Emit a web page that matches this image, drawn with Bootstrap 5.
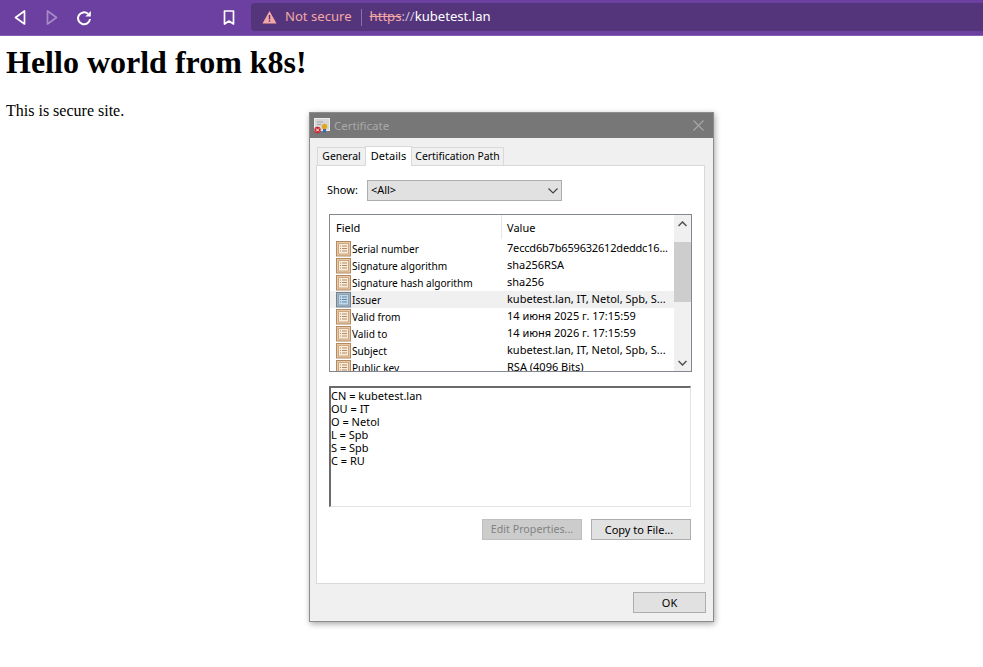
<!DOCTYPE html>
<html>

<head>
  <meta charset="utf-8">
  <title>kubetest.lan</title>
  <link href="https://cdn.jsdelivr.net/npm/bootstrap@5.3.2/dist/css/bootstrap.min.css" rel="stylesheet" type="text/css" />
  <script src="https://cdn.jsdelivr.net/npm/bootstrap@5.3.2/dist/js/bootstrap.bundle.min.js"></script>
  <style>
    body {
      background: #fff;
      color: #000;
      font-family: "Liberation Serif", serif;
      font-size: 16px;
      min-height: 667px;
      position: relative;
      overflow: hidden;
    }

    /* browser toolbar */
    .browser-bar {
      height: 36px;
      background: #6c40a0;
      border-bottom: 1px solid #8660b2;
      font-family: "Noto Sans", sans-serif;
      padding: 3px 0 0 12px;
    }

    .tool-icon {
      width: 16px;
      height: 18px;
      margin-top: 6px;
      flex: none;
    }

    .nav-gap-a { margin-left: 16px; }
    .nav-gap-b { margin-left: 16px; }
    .nav-gap-c { margin-left: 129px; }

    .address-box {
      width: 732px;
      height: 28px;
      margin-left: 14px;
      background: #54357b;
      border-radius: 4px 0 0 4px;
      font-size: 13.1px;
      padding-left: 11px;
    }

    .warn-text { color: #f4a7a4; margin-left: 8px; }
    .addr-sep { width: 1px; height: 17px; background: #8a6fae; margin: 0 8px 0 9px; }
    .addr-https { color: #f4a7a4; text-decoration: line-through; }
    .addr-slash { color: #c9bcdc; }
    .addr-host { color: #fff; }

    /* page content */
    .page-title {
      font-family: "Liberation Serif", serif;
      font-size: 32px;
      font-weight: 700;
      line-height: 37px;
      margin: 8px 0 0 6px;
    }

    .page-text {
      margin: 21px 0 0 6px;
      line-height: 18px;
    }

    /* certificate window */
    .cert-window {
      position: absolute;
      left: 309px;
      top: 112px;
      width: 405px;
      height: 510px;
      background: #f0f0f0;
      border: 1px solid #8c8c8c;
      box-shadow: 1px 2px 6px rgba(0, 0, 0, .35);
      font-family: "Noto Sans", sans-serif;
      font-size: 11px;
      color: #000;
    }

    .cert-title {
      height: 25px;
      background: #777;
      color: #a9a9a9;
      font-size: 11.5px;
      padding-left: 4px;
    }

    .cert-title-text { margin-left: 4px; }
    .cert-close { margin-left: auto; margin-right: 9px; }

    .tab-strip {
      height: 27px;
      padding: 7px 0 0 8px;
      align-items: flex-end;
    }

    .win-tab {
      height: 18px;
      line-height: 17px;
      background: #f0f0f0;
      border: 1px solid #d9d9d9;
      border-bottom: 0;
      margin-left: -1px;
      white-space: nowrap;
      text-align: center;
      font-size: 10.4px;
    }

    .tab-general { width: 49px; }
    .tab-details { width: 47px; }
    .tab-path { width: 93px; }

    .win-tab-on {
      height: 20px;
      line-height: 17px;
      background: #fff;
      margin-bottom: -1px;
      position: relative;
      z-index: 1;
      font-size: 11px;
    }

    .tab-panel {
      width: 389px;
      height: 419px;
      margin-left: 6px;
      background: #fff;
      border: 1px solid #d9d9d9;
      padding: 14px 13px 0 12px;
    }

    .show-row { margin-left: -2px; }

    .show-select {
      width: 195px;
      height: 21px;
      margin-left: 9px;
      padding: 0 3px 0 3px;
      background: #e1e1e1;
      border: 1px solid #adadad;
    }

    .field-list {
      width: 363px;
      height: 158px;
      margin-top: 13px;
      border: 1px solid #828790;
      overflow: hidden;
    }

    .field-main { width: 344px; flex: none; overflow: hidden; }
    .field-head { height: 25px; }
    .head-a { width: 172px; padding-left: 6px; border-right: 1px solid #e5e5e5; height: 24px; line-height: 25px; }
    .head-b { padding-left: 5px; height: 24px; line-height: 25px; }

    .field-row { height: 17px; line-height: 16px; white-space: nowrap; }
    .field-row-on { background: #f0f0f0; }
    .field-name { width: 172px; padding-left: 6px; flex: none; gap: 1px; font-size: 10.1px; }
    .field-name svg { flex: none; }
    .field-value { padding-left: 5px; }
    .value-tight { letter-spacing: -0.18px; }

    .scroll-track { width: 17px; background: #f0f0f0; }
    .scroll-btn { height: 17px; margin-top: 0; }
    .scroll-gap { height: 10px; }
    .scroll-thumb { height: 60px; background: #cdcdcd; }

    .detail-box {
      width: 362px;
      height: 121px;
      margin-top: 14px;
      padding: 1px 0;
      border: 1px solid #e3e3e3;
      border-top: 2px solid #6b6b6b;
      border-left: 2px solid #6b6b6b;
      line-height: 13px;
      white-space: pre;
    }

    .win-btn {
      height: 21px;
      padding: 0;
      border-radius: 0;
      font-size: 11px;
      line-height: 19px;
      color: #000;
      background: #e1e1e1;
      border: 1px solid #adadad;
    }

    .win-btn:disabled {
      color: #838383;
      background: #cccccc;
      border-color: #bfbfbf;
      opacity: 1;
      font-size: 10.7px;
    }

    .panel-btns { margin-top: 12px; width: 362px; gap: 9px; }
    .btn-wide { width: 100px; }
    .btn-copy { padding-right: 4px; }
    .btn-ok { width: 73px; }
    .cert-foot { padding: 8px 7px 0 0; }
  </style>
</head>

<body>
  <svg width="0" height="0" class="d-block position-absolute">
    <defs>
      <g id="doc-orange">
        <rect x="0.5" y="0.5" width="14" height="14.500" fill="#e8c9a6" stroke="#b48a62" />
        <rect x="2.500" y="2.500" width="10" height="10.500" fill="#f8ecdc" stroke="#cfa77e" />
        <path d="M6 5h5M6 7.500h5M6 10h5M4 5h1M4 7.500h1M4 10h1" stroke="#b58a62" fill="none" />
      </g>
      <g id="doc-blue">
        <rect x="0.5" y="0.5" width="14" height="14.500" fill="#a3b4c2" stroke="#76838f" />
        <rect x="2.500" y="2.500" width="10" height="10.500" fill="#c4d8e8" stroke="#8ba4b8" />
        <path d="M6 5h5M6 7.500h5M6 10h5M4 5h1M4 7.500h1M4 10h1" stroke="#5d86a8" fill="none" />
      </g>
    </defs>
  </svg>

  <header class="browser-bar d-flex">
    <svg class="tool-icon" viewBox="0 0 16 18" fill="none" stroke="#fff" stroke-width="1.700" stroke-linejoin="round"><path d="M12.500 2v13L3.500 8.500z" /></svg>
    <svg class="tool-icon nav-gap-a" viewBox="0 0 16 18" fill="none" stroke="#a68bc6" stroke-width="1.700" stroke-linejoin="round"><path d="M3.500 2v13l9-6.500z" /></svg>
    <svg class="tool-icon nav-gap-b" viewBox="0 0 16 18" fill="none" stroke="#fff" stroke-width="2"><path d="M14 10a6 6 0 1 1-2-5.200" /><path d="M14.800 2v5.500H9.300z" fill="#fff" stroke="none" /></svg>
    <svg class="tool-icon nav-gap-c" viewBox="0 0 16 18" fill="none" stroke="#fff" stroke-width="1.700" stroke-linejoin="round"><path d="M3.500 2h9v13L8 12l-4.500 3z" /></svg>
    <div class="address-box d-flex align-items-center">
      <svg width="15" height="14" viewBox="0 0 15 14"><path d="M7.500 1 14.500 13.500H.5z" fill="#f4a7a4" /><path d="M6.800 5h1.400v4.500H6.800zM6.800 10.300h1.400v1.500H6.800z" fill="#54357b" /></svg>
      <span class="warn-text">Not secure</span>
      <span class="addr-sep"></span>
      <span><span class="addr-https">https</span><span class="addr-slash">://</span><span class="addr-host">kubetest.lan</span></span>
    </div>
  </header>

  <main>
    <h1 class="page-title">Hello world from k8s!</h1>
    <p class="page-text">This is secure site.</p>
  </main>

  <div class="cert-window">
    <div class="cert-title d-flex align-items-center">
      <svg width="16" height="16" viewBox="0 0 16 16">
        <rect x="0.500" y="0.500" width="15" height="12" fill="#d6d6d6" stroke="#ececec" />
        <path d="M3 4h6M3 6.500h4" stroke="#a8a8a8" />
        <circle cx="3.500" cy="12" r="3.200" fill="#c8242b" />
        <path d="M2 10.500l3 3M5 10.500l-3 3" stroke="#fff" />
        <path d="M9 10v5l1.500-1.200L12 15v-5" fill="#3568b8" />
        <circle cx="10.500" cy="8.500" r="2.700" fill="#e0a81e" />
      </svg>
      <span class="cert-title-text">Certificate</span>
      <svg class="cert-close" width="11" height="11" viewBox="0 0 11 11" stroke="#a9a9a9" stroke-width="1.100"><path d="M.5.500l10 10M10.500.500l-10 10" /></svg>
    </div>

    <div class="tab-strip d-flex">
      <div class="win-tab tab-general">General</div>
      <div class="win-tab win-tab-on tab-details">Details</div>
      <div class="win-tab tab-path">Certification Path</div>
    </div>

    <div class="tab-panel">
      <div class="show-row d-flex align-items-center">
        <span>Show:</span>
        <div class="show-select d-flex align-items-center justify-content-between">
          <span>&lt;All&gt;</span>
          <svg width="10" height="6" viewBox="0 0 10 6" fill="none" stroke="#444" stroke-width="1.200"><path d="M.5.500 5 5 9.500.5" /></svg>
        </div>
      </div>

      <div class="field-list d-flex">
        <div class="field-main">
          <div class="field-head d-flex">
            <div class="head-a">Field</div>
            <div class="head-b">Value</div>
          </div>
          <div class="field-row d-flex"><div class="field-name d-flex align-items-center"><svg width="15" height="16"><use href="#doc-orange" /></svg><span>Serial number</span></div><div class="field-value value-tight">7eccd6b7b659632612deddc16...</div></div>
          <div class="field-row d-flex"><div class="field-name d-flex align-items-center"><svg width="15" height="16"><use href="#doc-orange" /></svg><span>Signature algorithm</span></div><div class="field-value">sha256RSA</div></div>
          <div class="field-row d-flex"><div class="field-name d-flex align-items-center"><svg width="15" height="16"><use href="#doc-orange" /></svg><span>Signature hash algorithm</span></div><div class="field-value">sha256</div></div>
          <div class="field-row field-row-on d-flex"><div class="field-name d-flex align-items-center"><svg width="15" height="16"><use href="#doc-blue" /></svg><span>Issuer</span></div><div class="field-value">kubetest.lan, IT, Netol, Spb, S...</div></div>
          <div class="field-row d-flex"><div class="field-name d-flex align-items-center"><svg width="15" height="16"><use href="#doc-orange" /></svg><span>Valid from</span></div><div class="field-value">14 июня 2025 г. 17:15:59</div></div>
          <div class="field-row d-flex"><div class="field-name d-flex align-items-center"><svg width="15" height="16"><use href="#doc-orange" /></svg><span>Valid to</span></div><div class="field-value">14 июня 2026 г. 17:15:59</div></div>
          <div class="field-row d-flex"><div class="field-name d-flex align-items-center"><svg width="15" height="16"><use href="#doc-orange" /></svg><span>Subject</span></div><div class="field-value">kubetest.lan, IT, Netol, Spb, S...</div></div>
          <div class="field-row d-flex"><div class="field-name d-flex align-items-center"><svg width="15" height="16"><use href="#doc-orange" /></svg><span>Public key</span></div><div class="field-value">RSA (4096 Bits)</div></div>
        </div>
        <div class="scroll-track d-flex flex-column">
          <div class="scroll-btn d-flex align-items-center justify-content-center">
            <svg width="9" height="6" viewBox="0 0 9 6" fill="none" stroke="#505050" stroke-width="1.500"><path d="M.5 5 4.500 1l4 4" /></svg>
          </div>
          <div class="scroll-gap"></div>
          <div class="scroll-thumb"></div>
          <div class="scroll-btn d-flex align-items-center justify-content-center mt-auto">
            <svg width="9" height="6" viewBox="0 0 9 6" fill="none" stroke="#505050" stroke-width="1.500"><path d="M.5 1l4 4 4-4" /></svg>
          </div>
        </div>
      </div>

      <div class="detail-box">CN = kubetest.lan
OU = IT
O = Netol
L = Spb
S = Spb
C = RU</div>

      <div class="panel-btns d-flex justify-content-end">
        <button class="btn win-btn btn-wide" type="button" disabled>Edit Properties...</button>
        <button class="btn win-btn btn-wide btn-copy" type="button">Copy to File...</button>
      </div>
    </div>

    <div class="cert-foot d-flex justify-content-end">
      <button class="btn win-btn btn-ok" type="button">OK</button>
    </div>
  </div>
</body>

</html>
